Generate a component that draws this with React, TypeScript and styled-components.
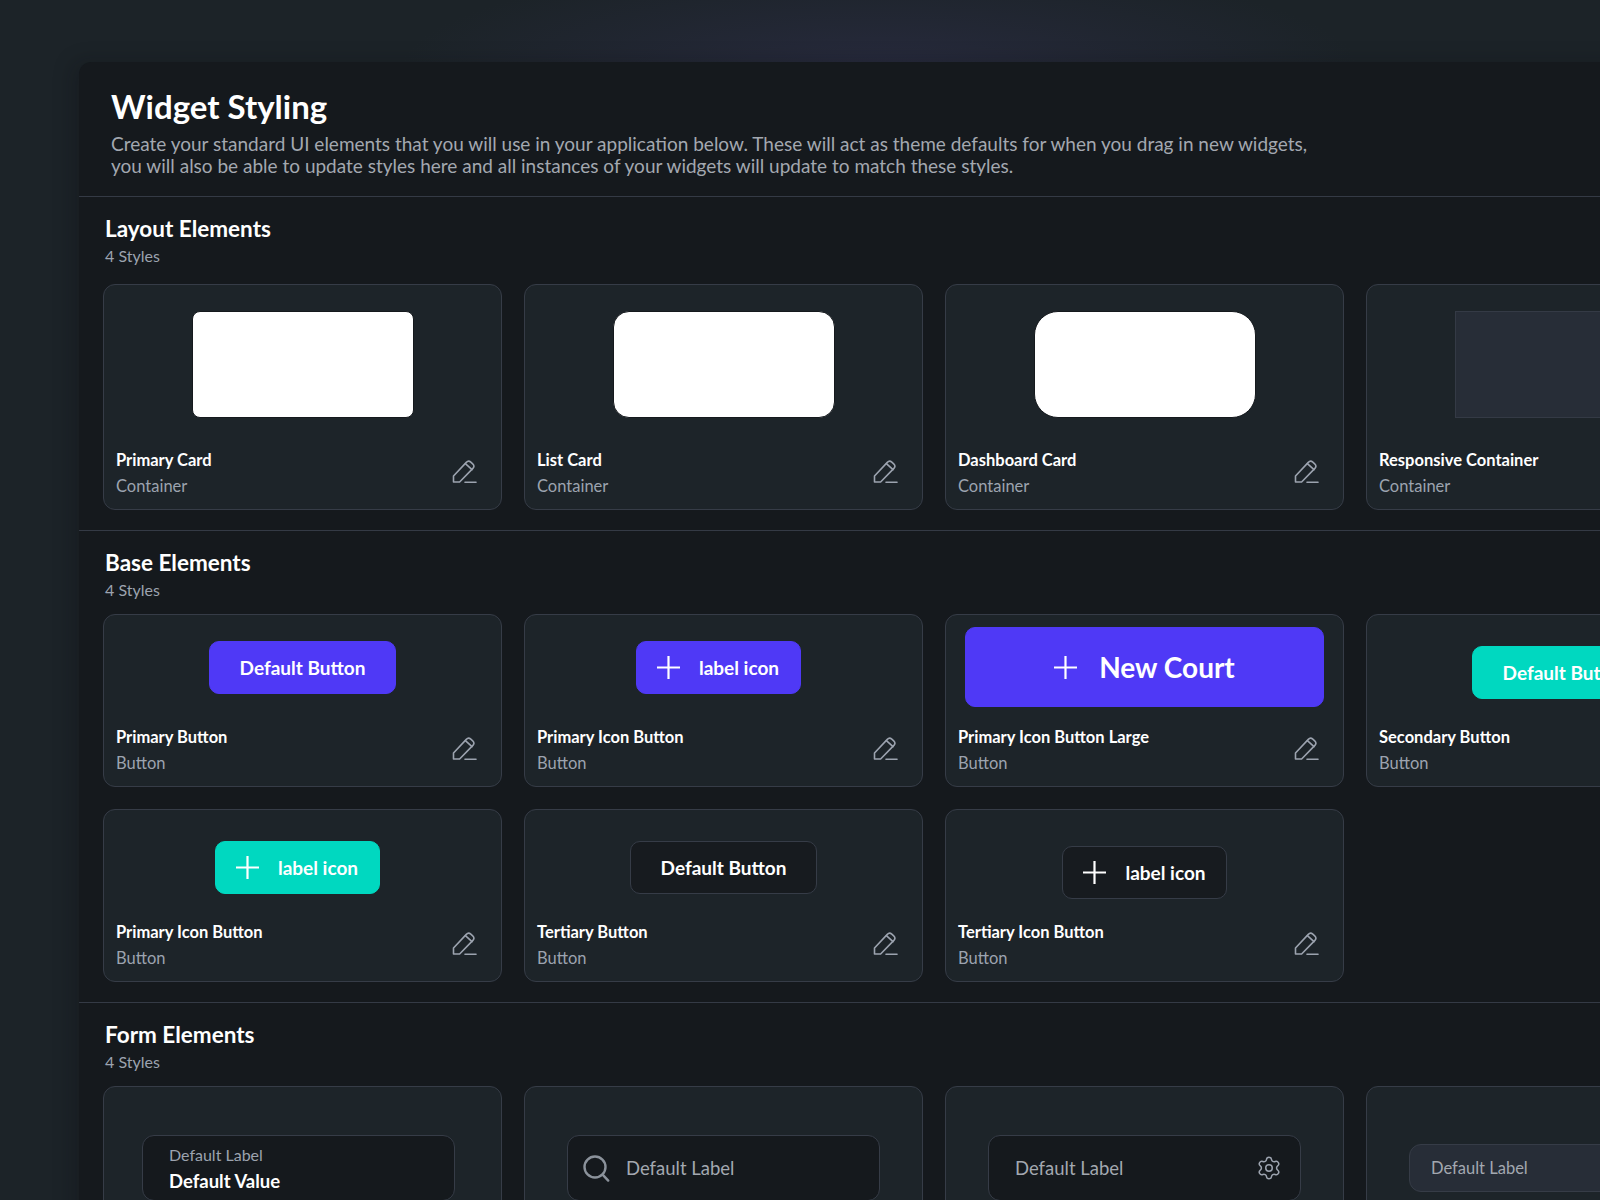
import React from "react";
import styled, { createGlobalStyle } from "styled-components";
import { Settings } from "lucide-react";

const GlobalStyle = createGlobalStyle`
  html, body {
    margin: 0;
    padding: 0;
    height: 1200px;
    overflow: hidden;
    background: #1c2328;
  }
  body {
    font-family: "Lato", "Liberation Sans", sans-serif;
  }
  * {
    box-sizing: border-box;
  }
`;

const Page = styled.div`
  width: 1600px;
  height: 1200px;
  overflow: hidden;
  padding: 62px 0 0 79px;
  background:
    radial-gradient(ellipse 480px 110px at 880px 70px, #272a3d 0%, rgba(39, 42, 61, 0) 100%),
    #1c2328;
`;

const Panel = styled.main`
  width: 1760px;
  height: 1200px;
  background: #15191d;
  border-radius: 12px 0 0 0;
  box-shadow: -6px 0 20px rgba(10, 12, 15, 0.25);
`;

const Header = styled.header`
  height: 135px;
  display: flex;
  justify-content: space-between;
  padding: 25px 0 0 32px;
  border-bottom: 1px solid #343a45;
`;

const Title = styled.h1`
  margin: 0 0 8px;
  font-size: 33px;
  line-height: 38px;
  font-weight: 700;
  color: #ffffff;
`;

const Description = styled.p`
  margin: 0;
  font-size: 19px;
  line-height: 21.5px;
  color: #a3a8b0;
`;

const CreateButton = styled.button`
  width: 187px;
  height: 53px;
  margin: 3px 19px 0 0;
  padding: 0 18px;
  border: none;
  border-radius: 10px;
  background: #4f39f6;
  color: #ffffff;
  font: 700 19px "Lato", sans-serif;
  text-align: left;
`;

const Section = styled.section<{ $divider?: boolean; $gap: number }>`
  padding: 18px 0 20px 24px;
  border-bottom: ${(p) => (p.$divider ? "1px solid #343a45" : "none")};
  > h2 {
    margin: 0 0 0 2px;
    font-size: 22.5px;
    line-height: 28px;
    font-weight: 700;
    color: #ffffff;
  }
  > p {
    margin: 0 0 ${(p) => p.$gap}px 2px;
    font-size: 16px;
    line-height: 26px;
    color: #9ca3af;
  }
`;

const CardGrid = styled.div`
  display: grid;
  grid-template-columns: repeat(4, 399px);
  gap: 22px;
`;

const Card = styled.article<{ $height: number }>`
  height: ${(p) => p.$height}px;
  display: flex;
  flex-direction: column;
  background: #1d2429;
  border: 1px solid #363c47;
  border-radius: 12px;
`;

const Preview = styled.div<{ $top: number; $right?: number }>`
  flex: 1;
  display: flex;
  justify-content: center;
  align-items: flex-start;
  padding-top: ${(p) => p.$top}px;
  padding-right: ${(p) => p.$right ?? 0}px;
`;

const Footer = styled.div`
  height: 65px;
  display: flex;
  justify-content: space-between;
  align-items: flex-start;
  padding: 3px 24px 0 12px;
`;

const Name = styled.div`
  font-size: 16.5px;
  line-height: 26px;
  font-weight: 700;
  color: #ffffff;
`;

const Kind = styled.div`
  font-size: 16.5px;
  line-height: 26px;
  color: #9ca3af;
`;

const EditSvg = styled.svg`
  margin-top: 12px;
  fill: none;
  stroke: #9ca3af;
  stroke-width: 1.6;
  stroke-linejoin: round;
  stroke-linecap: round;
`;

const SampleBox = styled.div<{ $radius: number; $solid?: boolean }>`
  width: 222px;
  height: 107px;
  background: ${(p) => (p.$solid ? "#272d37" : "#ffffff")};
  border: 1px solid ${(p) => (p.$solid ? "#343a45" : "#15191d")};
  border-radius: ${(p) => p.$radius}px;
`;

const tones = {
  primary: { bg: "#4f39f6", border: "#4f39f6" },
  teal: { bg: "#00d8c0", border: "#00d8c0" },
  tertiary: { bg: "#171b1f", border: "#363c47" },
};

const Btn = styled.button<{ $tone: keyof typeof tones; $withIcon?: boolean }>`
  height: 53px;
  width: ${(p) => (p.$withIcon ? 165 : 187)}px;
  display: flex;
  align-items: center;
  justify-content: center;
  gap: 19px;
  background: ${(p) => tones[p.$tone].bg};
  border: 1px solid ${(p) => tones[p.$tone].border};
  border-radius: 10px;
  color: #ffffff;
  font: 700 19px "Lato", sans-serif;
  white-space: nowrap;
`;

const LargeBtn = styled(Btn)`
  width: 359px;
  height: 80px;
  gap: 22px;
  font-size: 28px;
`;

const PlusSvg = styled.svg`
  flex: none;
  stroke: #ffffff;
  stroke-width: 2.2;
`;

const Field = styled.div<{ $height?: number; $alt?: boolean }>`
  width: 313px;
  height: ${(p) => p.$height ?? 66}px;
  display: flex;
  align-items: center;
  background: ${(p) => (p.$alt ? "#272d37" : "#15191d")};
  border: 1px solid #363c47;
  border-radius: 12px;
`;

const LabeledField = styled(Field)`
  flex-direction: column;
  align-items: flex-start;
  justify-content: center;
  padding-left: 26px;
`;

const SmallLabel = styled.span`
  font-size: 16px;
  line-height: 27px;
  color: #9ca3af;
`;

const Value = styled.span`
  font-size: 18.5px;
  line-height: 27px;
  font-weight: 700;
  color: #ffffff;
`;

const FieldText = styled.span`
  flex: 1;
  font-size: 18.5px;
  color: #a3a8b0;
`;

const SearchField = styled(Field)`
  padding-left: 15px;
  gap: 16px;
`;

const SettingsField = styled(Field)`
  padding: 0 18px 0 26px;
  color: #9ca3af;
`;

const AltField = styled(Field)`
  padding-left: 21px;
  > span {
    font-size: 16.5px;
  }
`;

const EditIcon = () => (
  <EditSvg width="25" height="25" viewBox="0 0 25 25">
    <path d="M1.5 17 14.3 3.4a3.2 3.2 0 0 1 4.5-.2l1.9 1.7a3.2 3.2 0 0 1 .2 4.5L7.6 23H1.5Z" />
    <path d="M13.4 4.6 20 10.6" />
    <path d="M13 23.2h11" />
  </EditSvg>
);

const PlusIcon = ({ size = 23 }: { size?: number }) => (
  <PlusSvg width={size} height={size} viewBox="0 0 23 23">
    <path d="M11.5 0v23M0 11.5h23" />
  </PlusSvg>
);

const SearchIcon = () => (
  <svg width="27" height="27" viewBox="0 0 27 27" fill="none" stroke="#8b929b" strokeWidth="2.4" strokeLinecap="round">
    <circle cx="12" cy="12" r="10.5" />
    <path d="m19.6 19.6 5.6 6" />
  </svg>
);

const WidgetCard = ({
  name,
  kind,
  height,
  top,
  right,
  children,
}: {
  name: string;
  kind: string;
  height: number;
  top: number;
  right?: number;
  children?: React.ReactNode;
}) => (
  <Card $height={height}>
    <Preview $top={top} $right={right}>
      {children}
    </Preview>
    <Footer>
      <div>
        <Name>{name}</Name>
        <Kind>{kind}</Kind>
      </div>
      <EditIcon />
    </Footer>
  </Card>
);

export default function App() {
  return (
    <Page>
      <GlobalStyle />
      <Panel>
        <Header>
          <div>
            <Title>Widget Styling</Title>
            <Description>
              Create your standard UI elements that you will use in your application below. These will act as theme defaults for when you drag in new widgets,
              <br />
              you will also be able to update styles here and all instances of your widgets will update to match these styles.
            </Description>
          </div>
          <CreateButton>Create Style</CreateButton>
        </Header>

        <Section $divider $gap={15}>
          <h2>Layout Elements</h2>
          <p>4 Styles</p>
          <CardGrid>
            <WidgetCard name="Primary Card" kind="Container" height={226} top={26}>
              <SampleBox $radius={8} />
            </WidgetCard>
            <WidgetCard name="List Card" kind="Container" height={226} top={26}>
              <SampleBox $radius={16} />
            </WidgetCard>
            <WidgetCard name="Dashboard Card" kind="Container" height={226} top={26}>
              <SampleBox $radius={24} />
            </WidgetCard>
            <WidgetCard name="Responsive Container" kind="Container" height={226} top={26}>
              <SampleBox $radius={0} $solid />
            </WidgetCard>
          </CardGrid>
        </Section>

        <Section $divider $gap={11}>
          <h2>Base Elements</h2>
          <p>4 Styles</p>
          <CardGrid>
            <WidgetCard name="Primary Button" kind="Button" height={173} top={26}>
              <Btn $tone="primary">Default Button</Btn>
            </WidgetCard>
            <WidgetCard name="Primary Icon Button" kind="Button" height={173} top={26} right={11}>
              <Btn $tone="primary" $withIcon>
                <PlusIcon />
                label icon
              </Btn>
            </WidgetCard>
            <WidgetCard name="Primary Icon Button Large" kind="Button" height={173} top={12}>
              <LargeBtn $tone="primary">
                <PlusIcon />
                New Court
              </LargeBtn>
            </WidgetCard>
            <WidgetCard name="Secondary Button" kind="Button" height={173} top={31}>
              <Btn $tone="teal">Default Button</Btn>
            </WidgetCard>
            <WidgetCard name="Primary Icon Button" kind="Button" height={173} top={31} right={11}>
              <Btn $tone="teal" $withIcon>
                <PlusIcon />
                label icon
              </Btn>
            </WidgetCard>
            <WidgetCard name="Tertiary Button" kind="Button" height={173} top={31}>
              <Btn $tone="tertiary">Default Button</Btn>
            </WidgetCard>
            <WidgetCard name="Tertiary Icon Button" kind="Button" height={173} top={36}>
              <Btn $tone="tertiary" $withIcon>
                <PlusIcon />
                label icon
              </Btn>
            </WidgetCard>
          </CardGrid>
        </Section>

        <Section $gap={11}>
          <h2>Form Elements</h2>
          <p>4 Styles</p>
          <CardGrid>
            <WidgetCard name="Floating Input" kind="Input" height={226} top={48} right={8}>
              <LabeledField>
                <SmallLabel>Default Label</SmallLabel>
                <Value>Default Value</Value>
              </LabeledField>
            </WidgetCard>
            <WidgetCard name="Search Input" kind="Input" height={226} top={48}>
              <SearchField>
                <SearchIcon />
                <FieldText>Default Label</FieldText>
              </SearchField>
            </WidgetCard>
            <WidgetCard name="Icon Input" kind="Input" height={226} top={48}>
              <SettingsField>
                <FieldText>Default Label</FieldText>
                <Settings size={26} strokeWidth={1.4} />
              </SettingsField>
            </WidgetCard>
            <WidgetCard name="Compact Input" kind="Input" height={226} top={57}>
              <AltField $height={48} $alt>
                <FieldText>Default Label</FieldText>
              </AltField>
            </WidgetCard>
          </CardGrid>
        </Section>
      </Panel>
    </Page>
  );
}
